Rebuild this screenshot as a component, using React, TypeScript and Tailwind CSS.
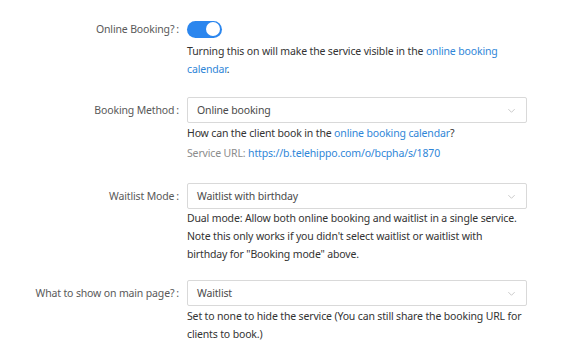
import React from "react";

const font = { fontFamily: '"Noto Sans", "Open Sans", sans-serif' };

// ─── Form row ────────────────────────────────────────────────────────────────
const FormItem = ({ label, children, help, className = "mb-[19px]" }: { label: string; children: React.ReactNode; help?: React.ReactNode; className?: string }) => (
  <div className={`flex ${className}`}>
    <div className="w-[187px] shrink-0 h-[26px] flex items-center justify-end text-[#595959] whitespace-nowrap">
      {label}
      <span className="ml-[2px] mr-[8px]">:</span>
    </div>
    <div className="w-[340px]">
      {children}
      {help}
    </div>
  </div>
);

const Select = ({ value }: { value: string }) => (
  <div className="h-[26px] border border-[#d9d9d9] rounded-[2px] flex items-center justify-between pl-[9px] pr-[10px] text-[#4a4a4a]">
    <span>{value}</span>
    <svg width="9" height="9" viewBox="0 0 10 10" fill="none" stroke="#c4c4c4" strokeWidth="1">
      <path d="M1.5 3.5 L5 7 L8.5 3.5" />
    </svg>
  </div>
);

const Link = ({ children }: { children: React.ReactNode }) => (
  <span className="text-[#2f86d8]">{children}</span>
);

export default function App() {
  return (
    <div className="w-[571px] h-[357px] bg-white pt-[16px] text-[10.5px] tracking-[-0.15px] leading-[18px] overflow-hidden" style={font}>
      <FormItem
        label="Online Booking?"
        help={
          <div className="text-[#333] whitespace-nowrap">
            Turning this on will make the service visible in the <Link>online booking</Link>
            <br />
            <Link>calendar</Link>.
          </div>
        }
      >
        <div className="h-[26px] flex items-center">
          <div className="w-[35px] h-[17px] rounded-full bg-[#2b86ee] flex items-center justify-end pr-[2px]">
            <div className="w-[14px] h-[14px] rounded-full bg-white" />
          </div>
        </div>
      </FormItem>

      <FormItem
        label="Booking Method"
        help={
          <div className="pt-px whitespace-nowrap">
            <div className="text-[#333]">
              How can the client book in the <Link>online booking calendar</Link>?
            </div>
            <div className="mt-[2px] text-[#8c8c8c]">
              Service URL: <Link>https://b.telehippo.com/o/bcpha/s/1870</Link>
            </div>
          </div>
        }
      >
        <Select value="Online booking" />
      </FormItem>

      <FormItem
        label="Waitlist Mode"
        className="mb-[17px] pt-[2px]"
        help={
          <div className="text-[#333] whitespace-nowrap">
            Dual mode: Allow both online booking and waitlist in a single service.
            <br />
            Note this only works if you didn't select waitlist or waitlist with
            <br />
            birthday for "Booking mode" above.
          </div>
        }
      >
        <Select value="Waitlist with birthday" />
      </FormItem>

      <FormItem
        label="What to show on main page?"
        help={
          <div className="pt-px text-[#333] whitespace-nowrap">
            Set to none to hide the service (You can still share the booking URL for
            <br />
            clients to book.)
          </div>
        }
      >
        <Select value="Waitlist" />
      </FormItem>
    </div>
  );
}
